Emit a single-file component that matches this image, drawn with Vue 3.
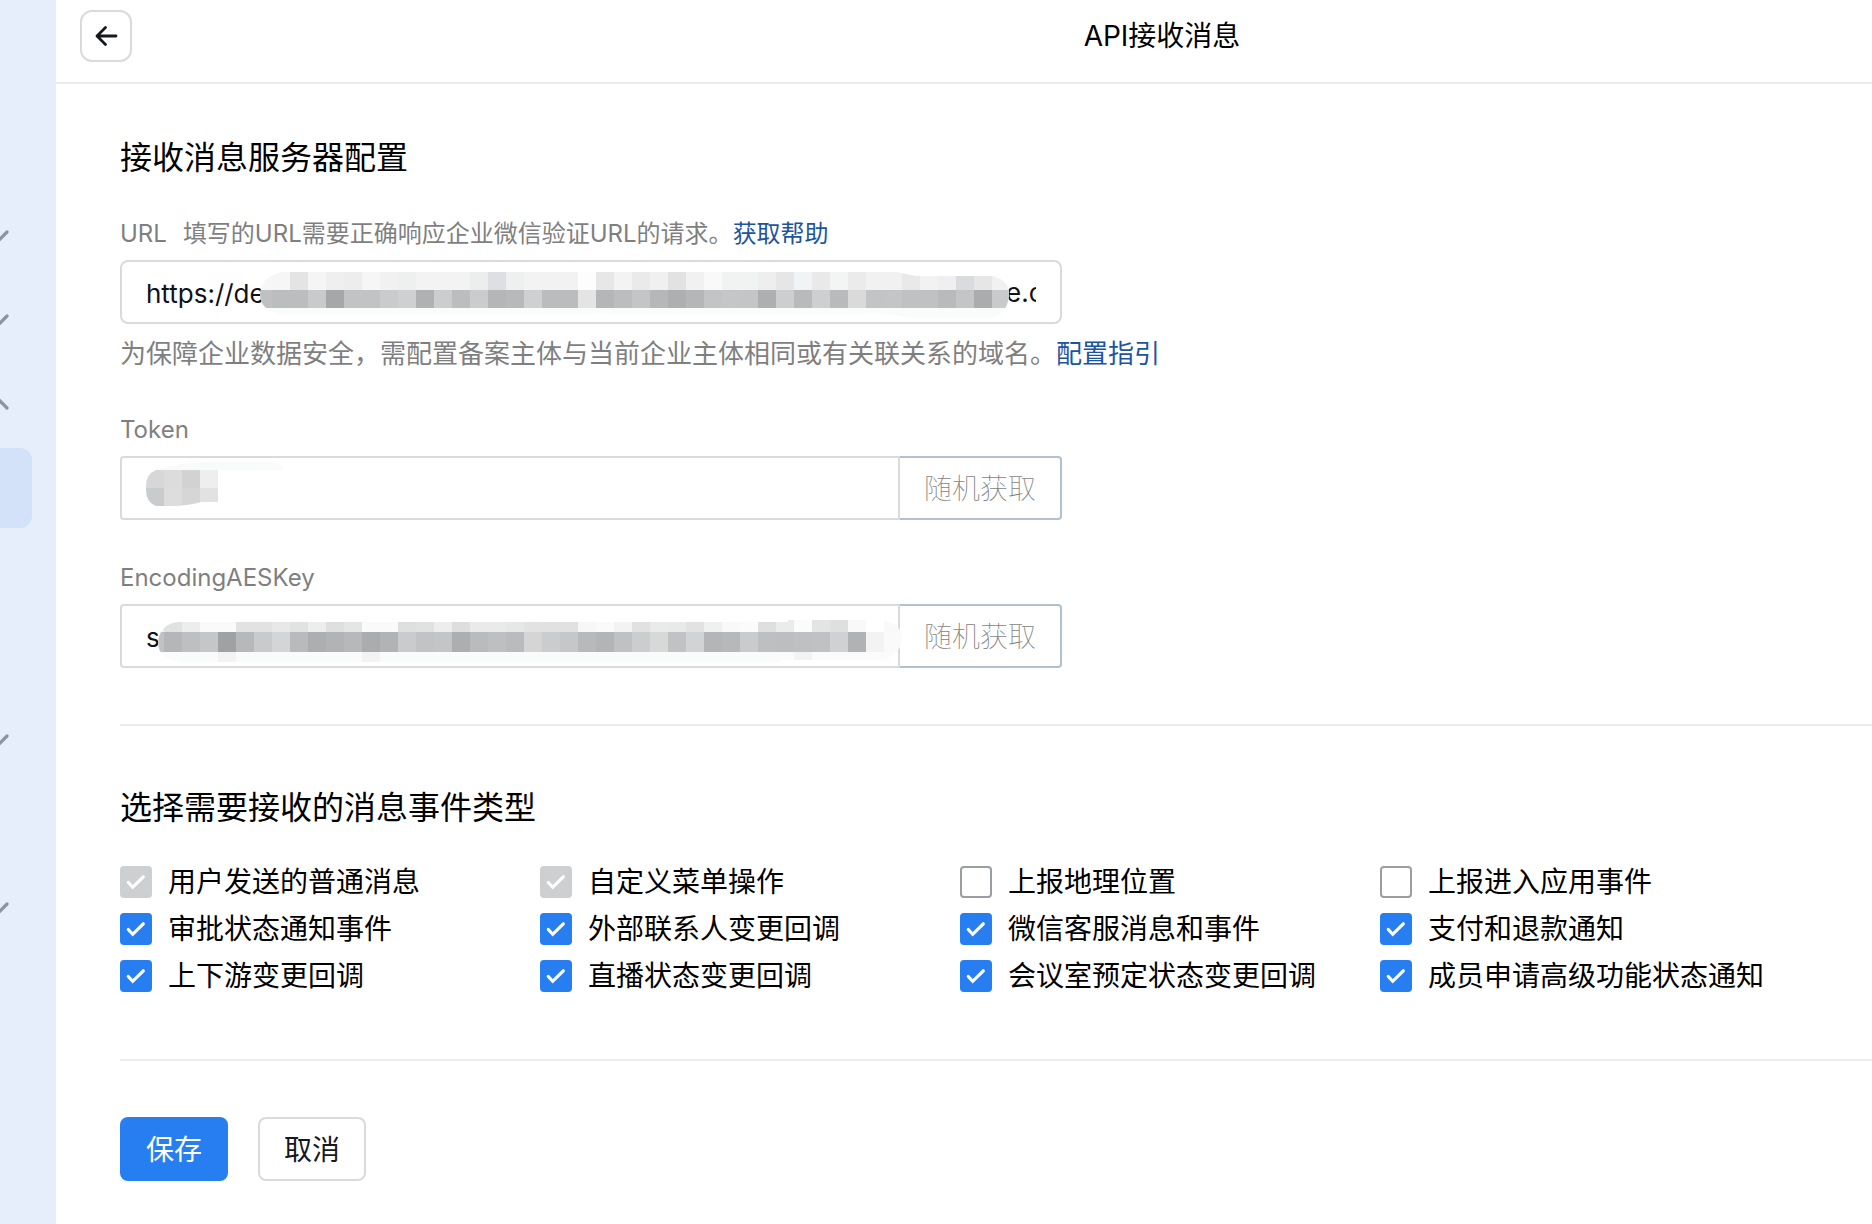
<template>
  <div class="layout">
    <nav class="sidebar" aria-label="菜单">
      <div
        v-for="(item, index) in menu"
        :key="index"
        class="menu-item"
        :class="{ active: item === 'active' }"
      >
        <svg v-if="item === 'down'" class="chevron" viewBox="0 0 10 14">
          <path d="M-1 11L7 3" />
        </svg>
        <svg v-if="item === 'up'" class="chevron" viewBox="0 0 10 14">
          <path d="M-1 3L7 11" />
        </svg>
      </div>
    </nav>

    <div class="page">
      <header class="header">
        <button class="back" type="button" aria-label="返回">
          <svg viewBox="0 0 24 24">
            <path d="M22 12H3M11.5 3.5L3 12L11.5 20.5" />
          </svg>
        </button>
        <h1 class="title">API接收消息</h1>
      </header>

      <form class="content" @submit.prevent>
        <section class="section">
          <h2>接收消息服务器配置</h2>

          <div class="field">
            <div class="label-row">
              <label for="url">URL</label>
              <span>填写的URL需要正确响应企业微信验证URL的请求。<a href="#">获取帮助</a></span>
            </div>
            <div class="control">
              <input id="url" v-model="url" class="rounded" type="text" />
              <span class="tail">e.c</span>
              <svg class="mask" width="942" height="64" viewBox="0 0 942 64" aria-hidden="true">
                <clipPath id="url-clip">
                  <path d="M162 12H776L796 16H872Q890 20 889 36Q886 58 868 58H790L766 54H160Q140 50 140 34Q142 16 162 12Z" />
                </clipPath>
                <g clip-path="url(#url-clip)">
                  <rect x="134" y="12" width="756" height="48" fill="#fafcfc" />
                  <rect v-for="(c, i) in urlTop" :key="'t' + i" :x="134 + i * 18" y="12" width="18" height="18" :fill="'#' + c" />
                  <rect v-for="(c, i) in urlMiddle" :key="'m' + i" :x="134 + i * 18" y="30" width="18" height="18" :fill="'#' + c" />
                </g>
              </svg>
            </div>
            <p class="help">为保障企业数据安全，需配置备案主体与当前企业主体相同或有关联关系的域名。<a href="#">配置指引</a></p>
          </div>

          <div class="field">
            <div class="label-row">
              <label for="token">Token</label>
            </div>
            <div class="control">
              <input id="token" v-model="token" type="text" />
              <button class="random" type="button">随机获取</button>
              <svg class="mask" width="942" height="64" viewBox="0 0 942 64" aria-hidden="true">
                <path d="M34 14Q60 6 88 6H154Q162 6 164 14Z" fill="#f9fbfb" />
                <clipPath id="token-clip">
                  <path d="M36 14H98V46H82Q66 50 52 50H36Q26 46 26 34V30Q26 18 36 14Z" />
                </clipPath>
                <g clip-path="url(#token-clip)">
                  <rect v-for="(c, i) in tokenTop" :key="'t' + i" :x="26 + i * 18" y="14" width="18" height="18" :fill="'#' + c" />
                  <rect v-for="(c, i) in tokenBottom" :key="'b' + i" :x="26 + i * 18" y="32" width="18" height="18" :fill="'#' + c" />
                </g>
              </svg>
            </div>
          </div>

          <div class="field">
            <div class="label-row">
              <label for="aes-key">EncodingAESKey</label>
            </div>
            <div class="control">
              <input id="aes-key" v-model="aesKey" type="text" />
              <button class="random" type="button">随机获取</button>
              <svg class="mask" width="942" height="64" viewBox="0 0 942 64" aria-hidden="true">
                <clipPath id="aes-clip">
                  <path d="M58 18H668V16H762Q782 20 782 35Q780 50 764 56H660V58H62Q38 56 38 38Q40 20 58 18Z" />
                </clipPath>
                <g clip-path="url(#aes-clip)">
                  <rect x="26" y="16" width="756" height="44" fill="#fafcfb" />
                  <rect v-for="(c, i) in aesTop" :key="'t' + i" :x="26 + i * 18" y="16" width="18" height="12" :fill="'#' + c" />
                  <rect v-for="(c, i) in aesMiddle" :key="'m' + i" :x="26 + i * 18" y="28" width="18" height="20" :fill="'#' + c" />
                  <rect v-for="x in [98, 242, 674]" :key="x" :x="x" y="48" width="18" height="10" fill="#f3f3f3" />
                </g>
              </svg>
            </div>
          </div>
        </section>

        <section class="section">
          <h2>选择需要接收的消息事件类型</h2>
          <div class="events">
            <label v-for="event in events" :key="event.name" class="event">
              <span class="box">
                <input v-model="event.checked" type="checkbox" :disabled="event.disabled" />
                <svg v-if="event.checked" viewBox="0 0 32 32">
                  <path d="M8.3 16.5L12.7 21.3L23.3 10.8" />
                </svg>
              </span>
              <span>{{ event.name }}</span>
            </label>
          </div>
        </section>

        <div class="actions">
          <button class="btn primary" type="submit">保存</button>
          <button class="btn" type="button">取消</button>
        </div>
      </form>
    </div>
  </div>
</template>

<script setup>
import { ref } from 'vue'

const menu = ['down', 'down', 'up', 'active', '', '', 'down', '', 'down']

const url = ref('https://de')
const token = ref('')
const aesKey = ref('s')

const events = ref([
  { name: '用户发送的普通消息', checked: true, disabled: true },
  { name: '自定义菜单操作', checked: true, disabled: true },
  { name: '上报地理位置', checked: false },
  { name: '上报进入应用事件', checked: false },
  { name: '审批状态通知事件', checked: true },
  { name: '外部联系人变更回调', checked: true },
  { name: '微信客服消息和事件', checked: true },
  { name: '支付和退款通知', checked: true },
  { name: '上下游变更回调', checked: true },
  { name: '直播状态变更回调', checked: true },
  { name: '会议室预定状态变更回调', checked: true },
  { name: '成员申请高级功能状态通知', checked: true }
])

// mosaic cells, one colour per 18px column
const cells = (text) => text.trim().split(/\s+/)

const urlTop = cells(`
  f7f7f7 f6f6f6 e4e4e4 f5f5f5 efefef ededed f6f6f6 f1f1f1 edf0ef f3f3f3 f3f3f3
  f3f3f3 ebeeed dddfe2 eeefef f3f3f3 f2f2f2 f2f2f2 fdfdfd e7e7e7 f3f3f3 eaeaea
  f0f0f0 e2e2e2 f1f1f1 f9f9f9 f1f3f2 f1f3f3 eeeeee e6e6e6 f1f4f4 e9e9e9 f3f5f4
  ebebeb f1f1f1 f1f1f1 e9e9e9 f2f2f2 efefef d9dbde e6e6e6 f1f1f1
`)
const urlMiddle = cells(`
  bfc0c2 bcbdbf bcbdbf c9cacc a6a7a9 c2c3c5 c2c3c5 cacbcc cfd0d1 b0b1b3 cccdcf
  bcbdbf cbccce b5b6b8 b8b9bb cfd0d2 bbbcbe bbbcbe e4e4e4 b5b6b8 bcbdbf c4c5c7
  b6b7b9 aeafb1 b5b6b8 c3c4c6 c5c6c8 c4c5c7 aeafb1 cdced0 b9babc cecfd1 b9babc
  dadada c3c4c6 c4c5c7 c0c1c3 c0c1c3 b9babc c4c5c7 abacae c9cacc
`)

const tokenTop = cells('d7d7d7 dcdcdc d2d2d2 eeeeee')
const tokenBottom = cells('cacbcd dddddd d6d6d6 e2e2e2')

const aesTop = cells(`
  f3f3f3 e0e2e1 ededed fafafa fafafa e2e2e2 e2e2e2 e8e8e8 e1e3e2 ededed dfdfdf
  e4e6e5 fafafa fafafa dee0df e0e2e1 ededed dedede eaeaea eaeaea e6e8e7 e2e2e2
  e1e1e1 e1e1e1 f7f7f7 fafafa f3f3f3 e1e1e1 eaeaea e8eae9 e2e2e2 eff1f0 f9f9f9
  fbfbfb dfdfdf eaeceb fbfbfb e3e5e4 dee0df f9f9f9 ffffff f9f9f9
`)
const aesMiddle = cells(`
  c1c2c4 b5b6b8 bebfc1 c5c6c8 a0a1a3 b7b8ba c9cacc d3d5d6 b9babc adaeb0 b2b3b5
  b7b8ba abacae b2b3b5 cacbcd c2c3c5 c4c5c7 adaeb0 babbbd bebfc1 babbbd d5d5d5
  cbccce c6c7c9 b8b9bb b3b4b6 c0c1c3 cccdcf d7d9d8 c1c2c4 d2d3d4 b4b5b7 b7b8ba
  cacbcd bebfc1 bdbec0 bfc0c2 c0c1c3 d0d1d3 b1b2b4 f3f3f4 fafafa
`)
</script>

<style>
body {
  margin: 0;
  background: #fff;
}
</style>

<style scoped>
.layout {
  display: flex;
  min-height: 100vh;
  color: #000;
  font-family: Inter, "Noto Sans CJK SC", sans-serif;
  font-size: 28px;
}

.layout button,
.layout input {
  box-sizing: border-box;
  margin: 0;
  font-family: inherit;
  font-size: 28px;
}

.sidebar {
  display: flex;
  flex: none;
  flex-direction: column;
  gap: 4px;
  box-sizing: border-box;
  width: 56px;
  padding: 196px 24px 0 0;
  background: #e7eefb;
}

.menu-item {
  display: flex;
  align-items: center;
  height: 80px;
  border-radius: 0 12px 12px 0;
}

.menu-item.active {
  background: #d3e2f8;
}

.chevron {
  width: 10px;
  height: 14px;
  fill: none;
  stroke: #8e949f;
  stroke-width: 3.2;
  stroke-linecap: round;
}

.page {
  flex: 1;
  min-width: 0;
  background: #fff;
}

.header {
  display: flex;
  align-items: flex-start;
  padding: 10px 0 20px 24px;
  border-bottom: 2px solid #ededed;
}

.back {
  display: flex;
  align-items: center;
  justify-content: center;
  width: 52px;
  height: 52px;
  padding: 0;
  border: 2px solid #dadada;
  border-radius: 12px;
  background: #fff;
}

.back svg {
  width: 24px;
  height: 24px;
  fill: none;
  stroke: #15181d;
  stroke-width: 2.8;
  stroke-linecap: round;
  stroke-linejoin: round;
}

.title {
  flex: 1;
  margin: 0;
  padding-left: 320px;
  font-size: 28px;
  font-weight: 400;
  line-height: 52px;
  text-align: center;
}

.content {
  padding: 48px 0 0 64px;
}

.section {
  margin-bottom: 56px;
  border-bottom: 2px solid #ededed;
}

h2 {
  margin: 0 0 34px;
  padding-top: 2px;
  font-size: 32px;
  font-weight: 400;
  line-height: 48px;
}

.field {
  margin-bottom: 40px;
}

.field:last-child {
  margin-bottom: 56px;
}

.label-row {
  display: flex;
  gap: 16px;
  margin-bottom: 10px;
  padding-top: 2px;
  color: #7f7f7f;
  font-size: 24px;
  line-height: 32px;
}

a {
  color: #1c54a0;
  text-decoration: none;
}

.control {
  position: relative;
  display: flex;
  width: 942px;
  max-width: 100%;
}

.control input {
  flex: 1;
  min-width: 0;
  height: 64px;
  padding: 2px 24px 0;
  border: 2px solid #dadada;
  border-radius: 4px 0 0 4px;
  outline: none;
  background: #fff;
  color: #0f1218;
  font-size: 26px;
}

.control input.rounded {
  border-radius: 8px;
}

.tail {
  position: absolute;
  top: 0;
  right: 26px;
  width: 30px;
  overflow: hidden;
  color: #0f1218;
  font-size: 26px;
  line-height: 66px;
}

.mask {
  position: absolute;
  top: 0;
  left: 0;
  pointer-events: none;
}

.layout .random {
  width: 162px;
  height: 64px;
  padding: 0 0 2px;
  border: 2px solid #b3c0cd;
  border-left: 0;
  border-radius: 0 4px 4px 0;
  background: #fff;
  color: #7f7f7f;
  font-weight: 100;
}

.help {
  margin: 12px 0 0;
  color: #7f7f7f;
  font-size: 26px;
  line-height: 36px;
}

.events {
  display: grid;
  grid-template-columns: repeat(4, 420px);
  row-gap: 15px;
  margin-bottom: 67px;
}

.event {
  display: flex;
  align-items: center;
  gap: 16px;
  line-height: 32px;
  white-space: nowrap;
}

.box {
  position: relative;
  flex: none;
  width: 32px;
  height: 32px;
}

.box input {
  display: block;
  width: 32px;
  height: 32px;
  border: 2px solid #9a9da1;
  border-radius: 4px;
  appearance: none;
  background: #fff;
}

.box input:checked {
  border-color: #267ef0;
  background: #267ef0;
}

.box input:disabled {
  border-color: #cdcfd1;
  background: #cdcfd1;
}

.box svg {
  position: absolute;
  inset: 0;
  fill: none;
  stroke: #fff;
  stroke-width: 3.2;
  stroke-linecap: round;
  stroke-linejoin: miter;
  pointer-events: none;
}

.actions {
  display: flex;
  gap: 30px;
  padding-bottom: 40px;
}

.btn {
  width: 108px;
  height: 64px;
  padding: 0 0 2px;
  border: 2px solid #dadada;
  border-radius: 8px;
  background: #fff;
  color: #15181d;
}

.btn.primary {
  border-color: #267ef0;
  background: #267ef0;
  color: #fff;
}
</style>
